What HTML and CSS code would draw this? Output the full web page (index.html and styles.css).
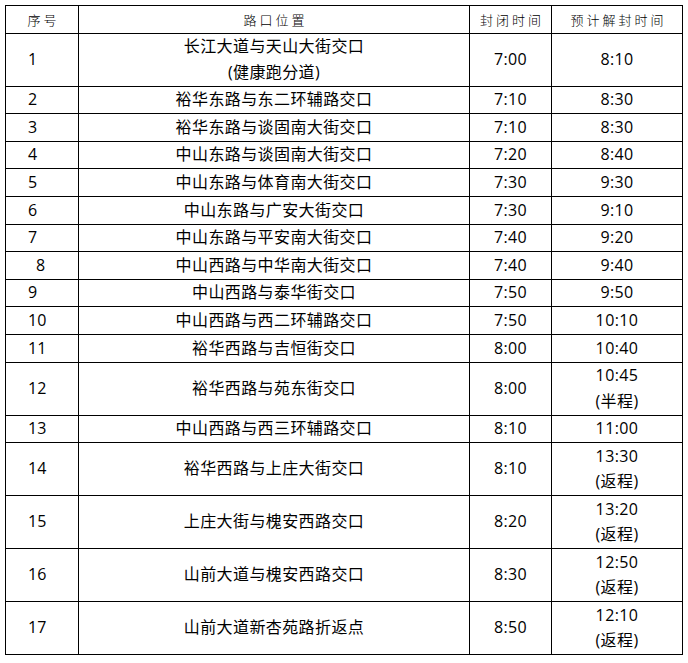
FILE: index.html
```html
<!DOCTYPE html>
<html lang="zh-CN">
<head>
<meta charset="utf-8">
<title>封闭路口时间表</title>
<link rel="stylesheet" href="styles.css">
</head>
<body>
<table class="schedule">
  <colgroup>
    <col class="c-no">
    <col class="c-loc">
    <col class="c-close">
    <col class="c-open">
  </colgroup>
  <thead>
    <tr>
      <th>序号</th>
      <th>路口位置</th>
      <th>封闭时间</th>
      <th>预计解封时间</th>
    </tr>
  </thead>
  <tbody>
    <tr><td class="no">1</td><td>长江大道与天山大街交口<br>(健康跑分道)</td><td>7:00</td><td>8:10</td></tr>
    <tr><td class="no">2</td><td>裕华东路与东二环辅路交口</td><td>7:10</td><td>8:30</td></tr>
    <tr><td class="no">3</td><td>裕华东路与谈固南大街交口</td><td>7:10</td><td>8:30</td></tr>
    <tr><td class="no">4</td><td>中山东路与谈固南大街交口</td><td>7:20</td><td>8:40</td></tr>
    <tr><td class="no">5</td><td>中山东路与体育南大街交口</td><td>7:30</td><td>9:30</td></tr>
    <tr><td class="no">6</td><td>中山东路与广安大街交口</td><td>7:30</td><td>9:10</td></tr>
    <tr><td class="no">7</td><td>中山东路与平安南大街交口</td><td>7:40</td><td>9:20</td></tr>
    <tr><td class="no"><span class="indent">8</span></td><td>中山西路与中华南大街交口</td><td>7:40</td><td>9:40</td></tr>
    <tr><td class="no">9</td><td>中山西路与泰华街交口</td><td>7:50</td><td>9:50</td></tr>
    <tr><td class="no">10</td><td>中山西路与西二环辅路交口</td><td>7:50</td><td>10:10</td></tr>
    <tr><td class="no">11</td><td>裕华西路与吉恒街交口</td><td>8:00</td><td>10:40</td></tr>
    <tr><td class="no">12</td><td>裕华西路与苑东街交口</td><td>8:00</td><td>10:45<br>(半程)</td></tr>
    <tr><td class="no">13</td><td>中山西路与西三环辅路交口</td><td>8:10</td><td>11:00</td></tr>
    <tr><td class="no">14</td><td>裕华西路与上庄大街交口</td><td>8:10</td><td>13:30<br>(返程)</td></tr>
    <tr><td class="no">15</td><td>上庄大街与槐安西路交口</td><td>8:20</td><td>13:20<br>(返程)</td></tr>
    <tr><td class="no">16</td><td>山前大道与槐安西路交口</td><td>8:30</td><td>12:50<br>(返程)</td></tr>
    <tr><td class="no">17</td><td>山前大道新杏苑路折返点</td><td>8:50</td><td>12:10<br>(返程)</td></tr>
  </tbody>
</table>
</body>
</html>
```

FILE: styles.css
```css
html, body {
  margin: 0;
  padding: 0;
  background: #fff;
}

body {
  padding: 5px 0 0 5px;
  font-family: "Open Sans", "Noto Sans CJK SC", sans-serif;
  color: #000;
}

.schedule {
  border-collapse: collapse;
  table-layout: fixed;
  width: 677px;
}

.c-no { width: 73px; }
.c-loc { width: 391px; }
.c-close { width: 82px; }
.c-open { width: 131px; }

.schedule th,
.schedule td {
  border: 1px solid #000;
  padding: 0.6px 0;
  line-height: 25.4px;
  text-align: center;
  vertical-align: middle;
}

.schedule th {
  font-family: "Noto Sans CJK SC", sans-serif;
  font-weight: 300;
  font-size: 13px;
  letter-spacing: 3px;
  padding-left: 3px;
  color: #000;
}

.schedule td {
  font-size: 16px;
  letter-spacing: 0.4px;
}

.schedule td.no {
  text-align: left;
  padding-left: 22px;
  letter-spacing: 0;
}

.indent {
  padding-left: 8px;
}
```
